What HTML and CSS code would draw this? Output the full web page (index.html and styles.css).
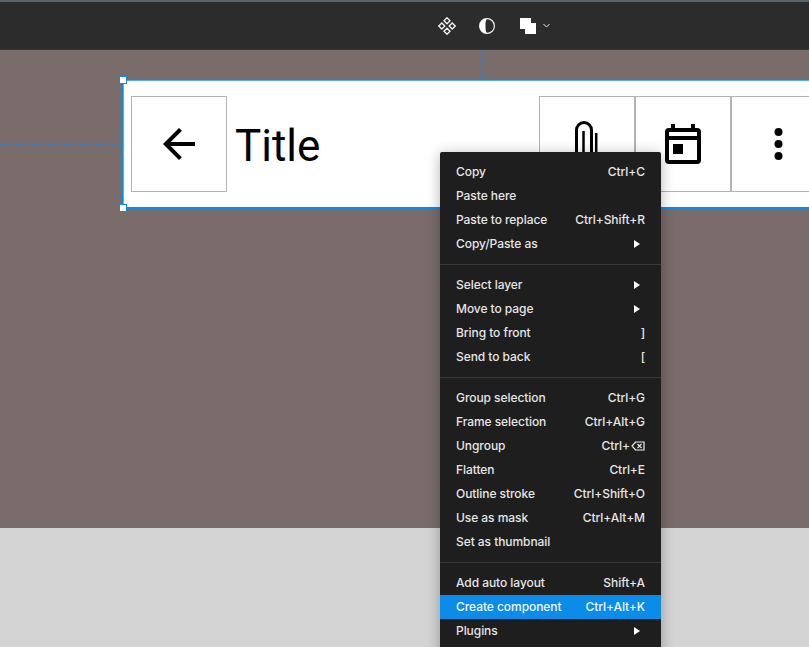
FILE: index.html
```html
<!DOCTYPE html>
<html lang="en">
<head>
<meta charset="utf-8">
<title>Editor</title>
<link rel="stylesheet" href="styles.css">
</head>
<body>
<div class="app">
  <header class="topbar">
    <div class="tools">
      <svg class="icon-comp" width="18" height="18" viewBox="0 0 18 18" fill="none" stroke="#f0f0f0" stroke-width="1.400"><path d="M9 .8 12 3.800 9 6.800 6 3.800zM3.800 6 6.800 9 3.800 12 .8 9zM14.200 6 17.200 9 14.200 12 11.200 9zM9 11.200 12 14.200 9 17.200 6 14.200z"/></svg>
      <svg class="icon-contrast" width="16" height="16" viewBox="0 0 16 16"><circle cx="8" cy="8" r="7.400" fill="none" stroke="#f0f0f0" stroke-width="1.200"/><path d="M8 .6A7.400 7.400 0 0 0 8 15.400C6.400 13.500 6.500 10.500 6.500 8S6.400 2.500 8 .6z" fill="#fff"/></svg>
      <div class="boolean">
        <svg width="16" height="16" viewBox="0 0 16 16" fill="#fff"><path d="M0 0H11V5H16V16H5V11H0z"/></svg>
        <svg class="chev" width="7" height="5" viewBox="0 0 7 5" fill="none" stroke="#e6e6e6"><path d="M.5 1 3.500 4 6.500 1"/></svg>
      </div>
    </div>
  </header>
  <main class="canvas">
    <div class="guide guide-v"></div>
    <div class="guide guide-h"></div>
    <section class="frame">
      <button class="icon-btn">
        <svg width="48" height="48" viewBox="0 0 48 48"><path d="M40 22H15.700l11.200-11.200L24 8 8 24l16 16 2.800-2.800L15.700 26H40z"/></svg>
      </button>
      <h1 class="title">Title</h1>
      <div class="actions">
        <button class="icon-btn">
          <svg width="48" height="48" viewBox="0 0 48 48" fill="none" stroke="#000" stroke-width="3"><path d="M13.500 48V10A7.500 7.500 0 0 1 28.500 10V48"/><path d="M20.500 11V48M33.200 13V48" stroke-width="2.500"/></svg>
        </button>
        <button class="icon-btn">
          <svg width="48" height="48" viewBox="0 0 48 48"><path fill-rule="evenodd" d="M12 4h4v4h16V4h4v4h2a4 4 0 0 1 4 4v28a4 4 0 0 1-4 4H10a4 4 0 0 1-4-4V12a4 4 0 0 1 4-4h2zM10 12v4h28v-4zM10 20v20h28V20zM14 24h10v10H14z"/></svg>
        </button>
        <button class="icon-btn">
          <svg width="48" height="48" viewBox="0 0 48 48"><circle cx="23.500" cy="12" r="4"/><circle cx="23.500" cy="24" r="4"/><circle cx="23.500" cy="36" r="4"/></svg>
        </button>
      </div>
      <span class="handle handle-tl"></span>
      <span class="handle handle-bl"></span>
    </section>
  </main>
  <div class="gray"></div>
  <nav class="menu">
    <ul class="group">
      <li class="item"><span>Copy</span><span>Ctrl+C</span></li>
      <li class="item"><span>Paste here</span></li>
      <li class="item"><span>Paste to replace</span><span>Ctrl+Shift+R</span></li>
      <li class="item"><span>Copy/Paste as</span><i class="arrow"></i></li>
    </ul>
    <ul class="group">
      <li class="item"><span>Select layer</span><i class="arrow"></i></li>
      <li class="item"><span>Move to page</span><i class="arrow"></i></li>
      <li class="item"><span>Bring to front</span><span>]</span></li>
      <li class="item"><span>Send to back</span><span>[</span></li>
    </ul>
    <ul class="group">
      <li class="item"><span>Group selection</span><span>Ctrl+G</span></li>
      <li class="item"><span>Frame selection</span><span>Ctrl+Alt+G</span></li>
      <li class="item"><span>Ungroup</span><span class="keys">Ctrl+<svg width="14" height="10" viewBox="0 0 14 10" fill="none" stroke="#ececec" stroke-width="1.200"><path d="M4.500 1H13V9H4.500L1 5zM6.500 3l4 4M10.500 3l-4 4"/></svg></span></li>
      <li class="item"><span>Flatten</span><span>Ctrl+E</span></li>
      <li class="item"><span>Outline stroke</span><span>Ctrl+Shift+O</span></li>
      <li class="item"><span>Use as mask</span><span>Ctrl+Alt+M</span></li>
      <li class="item"><span>Set as thumbnail</span></li>
    </ul>
    <ul class="group">
      <li class="item"><span>Add auto layout</span><span>Shift+A</span></li>
      <li class="item active"><span>Create component</span><span>Ctrl+Alt+K</span></li>
      <li class="item"><span>Plugins</span><i class="arrow"></i></li>
    </ul>
  </nav>
</div>
</body>
</html>
```
FILE: styles.css
```css
* { box-sizing: border-box; }
html, body { margin: 0; height: 100%; overflow: hidden; }
.app { position: relative; width: 809px; height: 647px; overflow: hidden; display: flex; flex-direction: column; background: #d4d4d4; }

.topbar { height: 50px; flex: none; background: #2c2c2c; border-top: 2px solid #566570; border-bottom: 1px solid #3a3636; display: flex; align-items: center; }
.tools { margin-left: 438px; display: flex; align-items: center; }
.icon-contrast { margin-left: 23px; }
.boolean { margin-left: 25px; display: flex; align-items: center; gap: 7px; }
.chev { margin-top: -1px; }

.canvas { position: relative; height: 478px; flex: none; background: #796c6b; }
.gray { flex: 1; background: #d4d4d4; }

.guide { position: absolute; }
.guide-v { left: 482px; top: 0; height: 29px; width: 2px; background: repeating-linear-gradient(to bottom, #3a7fc0 0 2px, transparent 2px 4px); }
.guide-h { left: 0; top: 93px; width: 122px; height: 2px; background: repeating-linear-gradient(to right, #2f86d0 0 2px, transparent 2px 4px); }

.frame { position: absolute; left: 122px; top: 29px; width: 720px; height: 130px; background: #fff; border: 1px solid #0c8ce9; border-right: 0; box-shadow: inset 1px 1px 0 rgba(12,140,233,.7), inset 0 -1px 0 #0c8ce9; padding: 16px 8px; display: flex; align-items: flex-start; }
.icon-btn { width: 96px; height: 96px; flex: none; padding: 0; margin: 0; background: #fff; border: 1px solid #b3b3b3; display: flex; align-items: center; justify-content: center; }
.title { margin: 0 0 0 8px; width: 304px; flex: none; font: 400 44px/100px Roboto, sans-serif; color: #000; }
.actions { display: flex; flex: none; }
.handle { position: absolute; left: -4px; width: 8px; height: 8px; background: #fff; border: 1px solid #0c8ce9; }
.handle-tl { top: -4px; }
.handle-bl { bottom: -4px; }

.menu { position: absolute; left: 440px; top: 152px; width: 221px; background: #1e1e1e; border-radius: 2px 2px 0 0; padding-top: 8px; box-shadow: 0 2px 14px rgba(0,0,0,.3); font: 500 12px/24px Inter, sans-serif; letter-spacing: -.06px; color: #e6e6e6; }
.group { list-style: none; margin: 0 0 8px; padding: 0 0 8px; border-bottom: 1px solid #383838; }
.group:last-child { border-bottom: 0; }
.item { height: 24px; padding: 0 16px; display: flex; justify-content: space-between; align-items: center; white-space: nowrap; }
.item.active { background: #0c8ce9; color: #f0f8ff; }
.keys { display: inline-flex; align-items: center; gap: 1px; }
.arrow { width: 0; height: 0; border-left: 6px solid #fff; border-top: 4px solid transparent; border-bottom: 4px solid transparent; margin-right: 5px; }
```
